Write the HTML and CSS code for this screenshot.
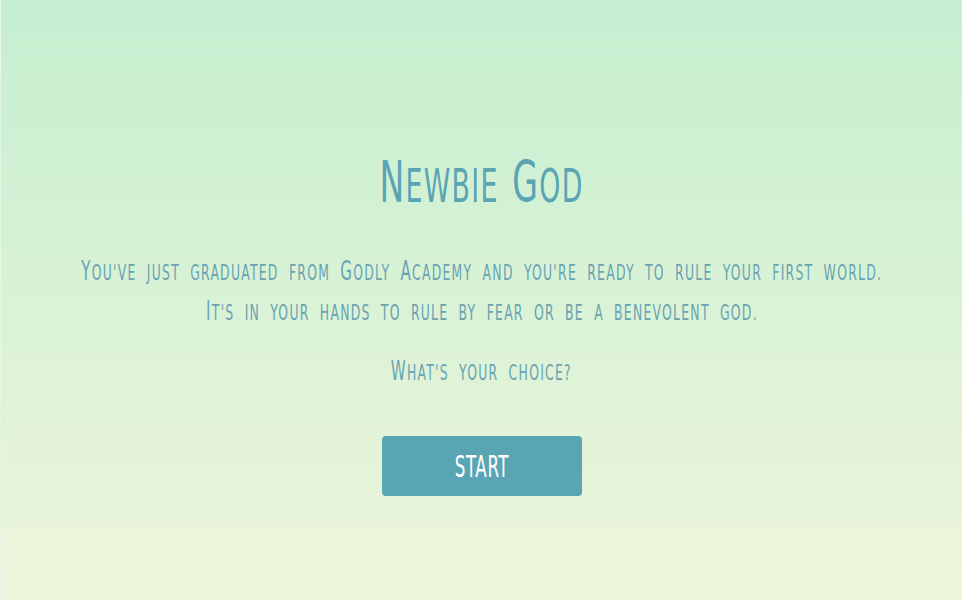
FILE: index.html
```html
<!DOCTYPE html>
<html lang="en">
<head>
<meta charset="utf-8">
<title>Newbie God</title>
<link rel="stylesheet" href="styles.css">
</head>
<body>
<main class="intro">
  <h1 class="title"><span class="squeeze title-squeeze"><span class="cap">N</span>ewbie <span class="cap">G</span>od</span></h1>
  <p class="story">
    <span class="line"><span class="squeeze text-squeeze"><span class="cap">Y</span>ou've just graduated from <span class="cap">G</span>odly <span class="cap">A</span>cademy and you're ready to rule your first world.</span></span>
    <span class="line"><span class="squeeze text-squeeze"><span class="cap">I</span>t's in your hands to rule by fear or be a benevolent god.</span></span>
  </p>
  <p class="question"><span class="squeeze text-squeeze"><span class="cap">W</span>hat's your choice?</span></p>
  <button class="start"><span class="squeeze button-squeeze">start</span></button>
</main>
</body>
</html>
```
FILE: styles.css
```css
html, body {
  margin: 0;
  padding: 0;
  height: 100%;
  overflow: hidden;
}
body {
  background: linear-gradient(to bottom, #c5efd0 0%, #eef5db 100%);
  font-family: "DejaVu Sans Condensed", "DejaVu Sans", sans-serif;
  text-transform: uppercase;
  color: #5fa3b3;
  border-left: 1px solid #e4f6e8;
  box-sizing: border-box;
}
.intro {
  display: flex;
  flex-direction: column;
  align-items: center;
  text-align: center;
  padding-top: 148px;
}
.squeeze {
  display: inline-block;
  white-space: nowrap;
}
.title-squeeze { transform: scaleX(0.64); }
.text-squeeze {
  transform: scaleX(0.627);
  word-spacing: 8px;
  margin: 0 -240px;
}
.button-squeeze { transform: scaleX(0.62); }

.title {
  margin: 0;
  font-size: 46.6px;
  font-weight: normal;
  line-height: 70px;
  color: #5aa4b4;
  letter-spacing: 2px;
  word-spacing: 6px;
}
.title .cap { font-size: 57.6px; }

.story {
  margin: 31px 0 0;
  font-size: 22px;
  line-height: 38px;
  color: #69a3b3;
  letter-spacing: 2px;
}
.line { display: block; }
.story .cap, .question .cap { font-size: 26.7px; }

.question {
  margin: 20px 0 0;
  font-size: 22px;
  line-height: 38px;
  color: #69a3b3;
  letter-spacing: 2px;
}
.start {
  margin-top: 44px;
  width: 200px;
  height: 60px;
  border: none;
  border-radius: 4px;
  background: #5aa5b3;
  color: #ffffff;
  font-family: inherit;
  text-transform: uppercase;
  font-size: 30px;
  letter-spacing: 1px;
  padding: 0;
  cursor: pointer;
}
```
